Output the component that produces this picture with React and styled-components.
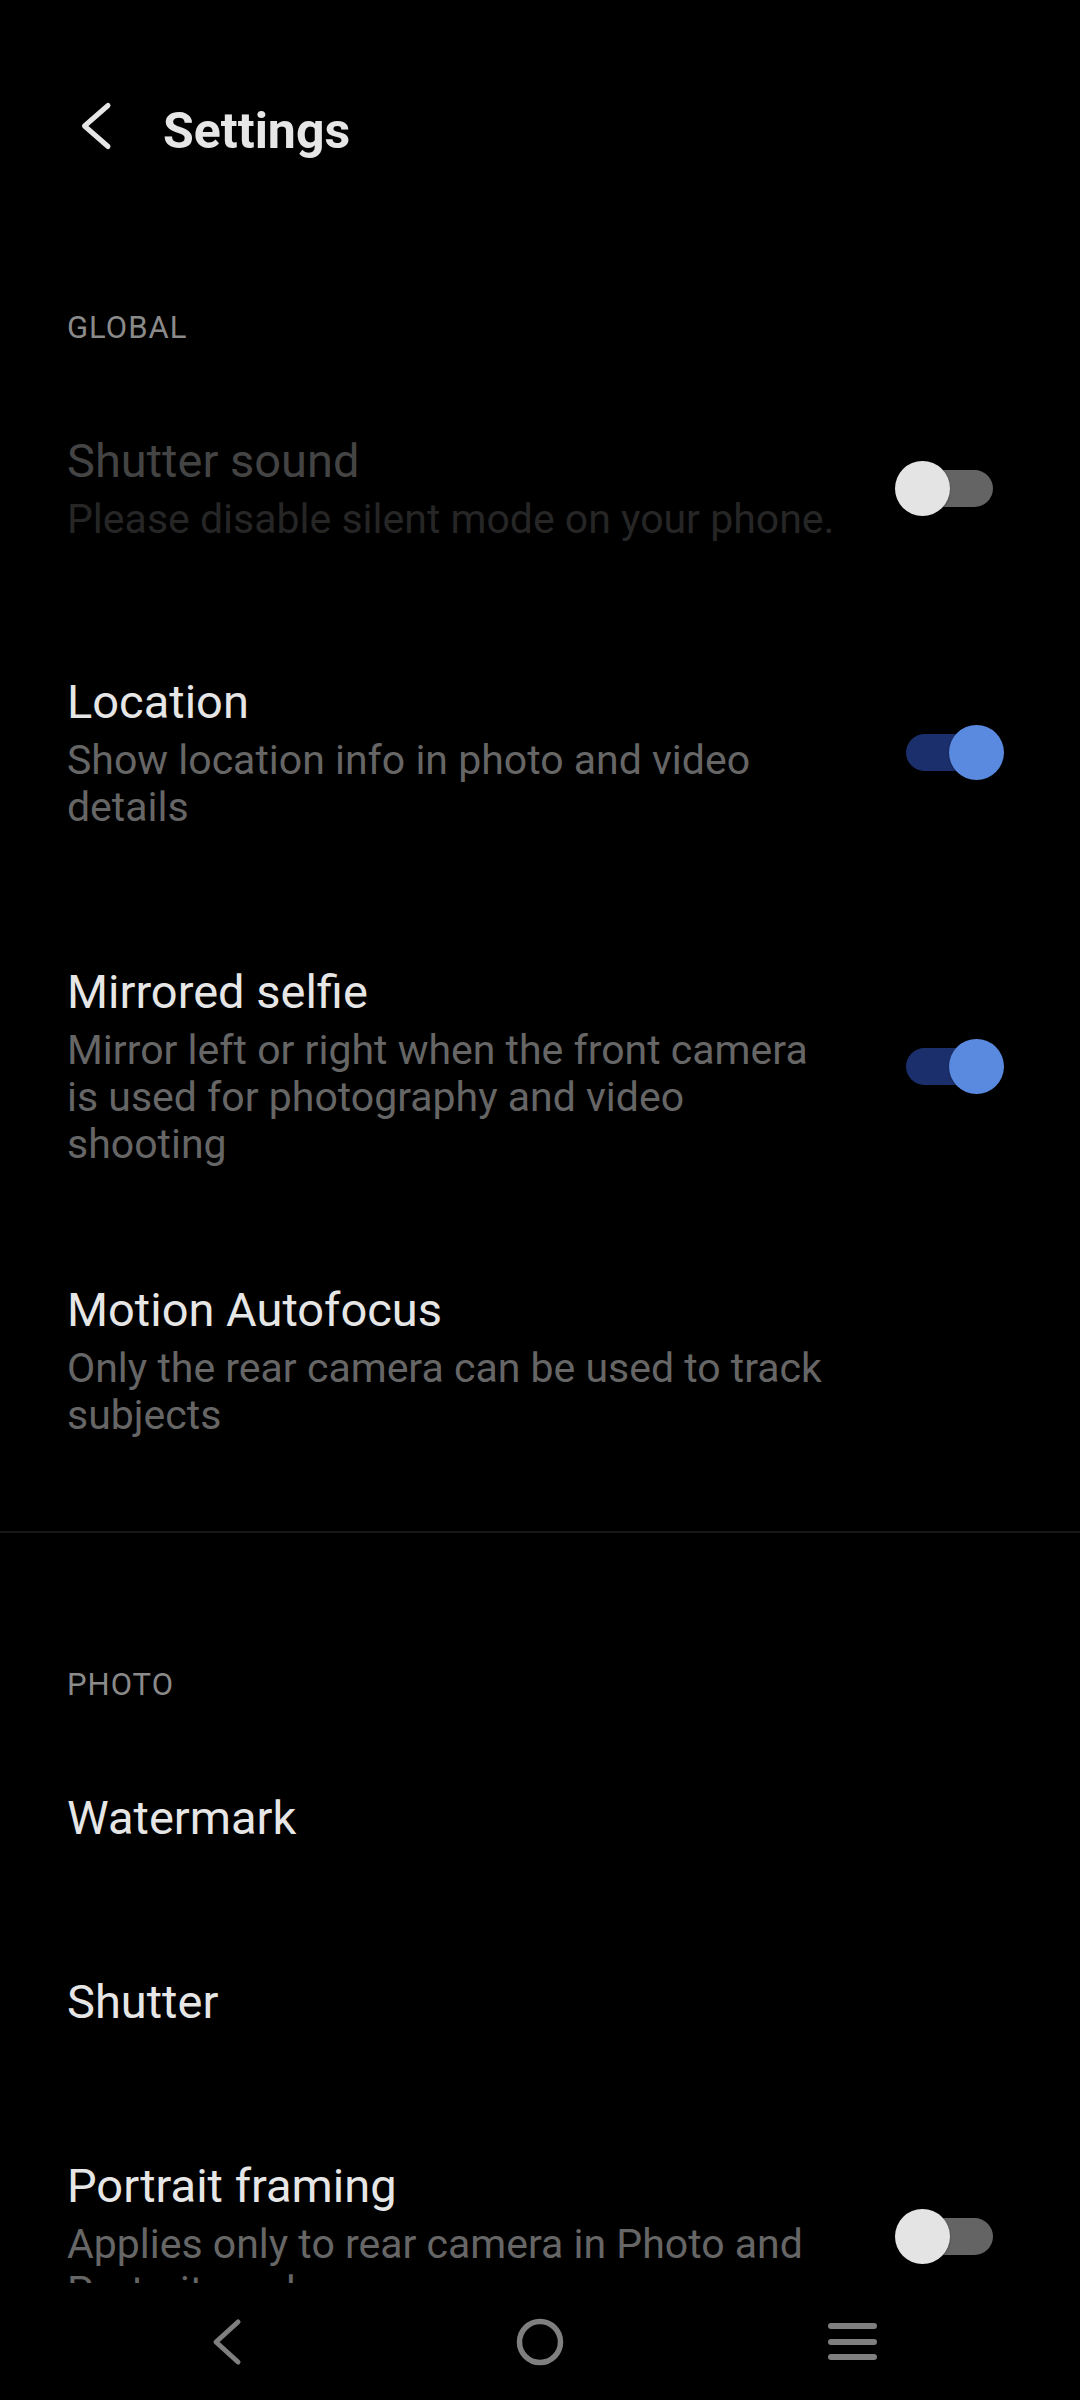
import React from 'react';
import styled, { createGlobalStyle } from 'styled-components';

const GlobalStyle = createGlobalStyle`
  html, body {
    margin: 0;
    padding: 0;
    background: #000;
  }
  body {
    font-family: Roboto, "Liberation Sans", sans-serif;
    -webkit-font-smoothing: antialiased;
  }
`;

const Screen = styled.div`
  width: 1080px;
  height: 2400px;
  display: flex;
  flex-direction: column;
  background: #000;
  overflow: hidden;
`;

const Scroll = styled.div`
  flex: 1;
  overflow: hidden;
`;

const Header = styled.header`
  display: flex;
  align-items: center;
  height: 100px;
  margin-top: 76px;
  padding-left: 78px;
`;

const BackButton = styled.button`
  display: flex;
  padding: 0;
  border: 0;
  background: none;
  margin-right: 45px;
`;

const Title = styled.h1`
  margin: 10px 0 0;
  font-size: 50px;
  line-height: 60px;
  font-weight: 700;
  color: #e6e6e6;
`;

const Section = styled.section`
  padding-bottom: ${(p) => p.$pb || 0}px;
`;

const SectionLabel = styled.div`
  margin: 132px 0 19px;
  padding-left: 67px;
  font-size: 31px;
  line-height: 40px;
  letter-spacing: 1px;
  color: #8a8a8a;
`;

const Row = styled.div`
  display: flex;
  align-items: center;
  padding: 66px 76px ${(p) => p.$pb}px 67px;
`;

const Texts = styled.div`
  flex: 1;
  max-width: 770px;
`;

const ItemTitle = styled.div`
  font-size: 47px;
  line-height: 56px;
  color: ${(p) => (p.$disabled ? '#444444' : '#e6e6e6')};
`;

const ItemSub = styled.div`
  margin-top: 7px;
  font-size: 41px;
  line-height: 47px;
  color: ${(p) => (p.$disabled ? '#262626' : '#666666')};
`;

const Switch = styled.div`
  position: relative;
  flex: none;
  width: 109px;
  height: 55px;
  margin-left: auto;
`;

const Track = styled.div`
  position: absolute;
  left: 11px;
  right: 11px;
  top: 9px;
  height: 37px;
  border-radius: 19px;
  background: ${(p) => (p.$on ? '#1b2f6c' : '#646464')};
`;

const Thumb = styled.div`
  position: absolute;
  top: 0;
  left: ${(p) => (p.$on ? '54px' : '0')};
  width: 55px;
  height: 55px;
  border-radius: 50%;
  background: ${(p) => (p.$on ? '#5a8ae0' : '#e4e4e4')};
  box-shadow: 0 1px 2px rgba(0, 0, 0, 0.4);
`;

const Divider = styled.hr`
  margin: 0;
  border: 0;
  height: 2px;
  background: #161616;
`;

const NavBar = styled.nav`
  flex: none;
  height: 117px;
  display: flex;
  align-items: center;
  justify-content: center;
  background: #000;
`;

const NavSlot = styled.div`
  width: 312px;
  display: flex;
  justify-content: center;
  align-items: center;
`;

const MenuIcon = styled.div`
  display: flex;
  flex-direction: column;
  gap: 9.5px;
  span {
    display: block;
    width: 49px;
    height: 6px;
    border-radius: 3px;
    background: #7f7f7f;
  }
`;

const Toggle = ({ on }) => (
  <Switch>
    <Track $on={on} />
    <Thumb $on={on} />
  </Switch>
);

const Item = ({ title, sub, toggle, disabled, pb = 65 }) => (
  <Row $pb={pb}>
    <Texts>
      <ItemTitle $disabled={disabled}>{title}</ItemTitle>
      {sub && <ItemSub $disabled={disabled}>{sub}</ItemSub>}
    </Texts>
    {toggle !== undefined && <Toggle on={toggle} />}
  </Row>
);

export default function App() {
  return (
    <>
      <GlobalStyle />
      <Screen>
        <Scroll>
          <Header>
            <BackButton aria-label="Back">
              <svg width="40" height="56" viewBox="0 0 40 56">
                <polyline
                  points="30,7.5 6.5,28 30,48.5"
                  fill="none"
                  stroke="#e6e6e6"
                  strokeWidth="5"
                  strokeLinecap="round"
                  strokeLinejoin="round"
                />
              </svg>
            </BackButton>
            <Title>Settings</Title>
          </Header>

          <Section $pb={27}>
            <SectionLabel>GLOBAL</SectionLabel>
            <Item
              title="Shutter sound"
              sub="Please disable silent mode on your phone."
              toggle={false}
              disabled
            />
            <Item
              title="Location"
              sub="Show location info in photo and video details"
              toggle
              pb={67}
            />
            <Item
              title="Mirrored selfie"
              sub="Mirror left or right when the front camera is used for photography and video shooting"
              toggle
              pb={48}
            />
            <Item
              title="Motion Autofocus"
              sub="Only the rear camera can be used to track subjects"
            />
          </Section>

          <Divider />

          <Section>
            <SectionLabel>PHOTO</SectionLabel>
            <Item title="Watermark" pb={62} />
            <Item title="Shutter" pb={62} />
            <Item
              title="Portrait framing"
              sub="Applies only to rear camera in Photo and Portrait mode"
              toggle={false}
            />
          </Section>
        </Scroll>

        <NavBar>
          <NavSlot>
            <svg width="34" height="48" viewBox="0 0 34 48">
              <polyline
                points="27,4 5,24 27,44"
                fill="none"
                stroke="#7f7f7f"
                strokeWidth="5"
                strokeLinecap="round"
                strokeLinejoin="round"
              />
            </svg>
          </NavSlot>
          <NavSlot>
            <svg width="48" height="48" viewBox="0 0 48 48">
              <circle cx="24" cy="24" r="20.5" fill="none" stroke="#7f7f7f" strokeWidth="5.5" />
            </svg>
          </NavSlot>
          <NavSlot>
            <MenuIcon>
              <span />
              <span />
              <span />
            </MenuIcon>
          </NavSlot>
        </NavBar>
      </Screen>
    </>
  );
}
